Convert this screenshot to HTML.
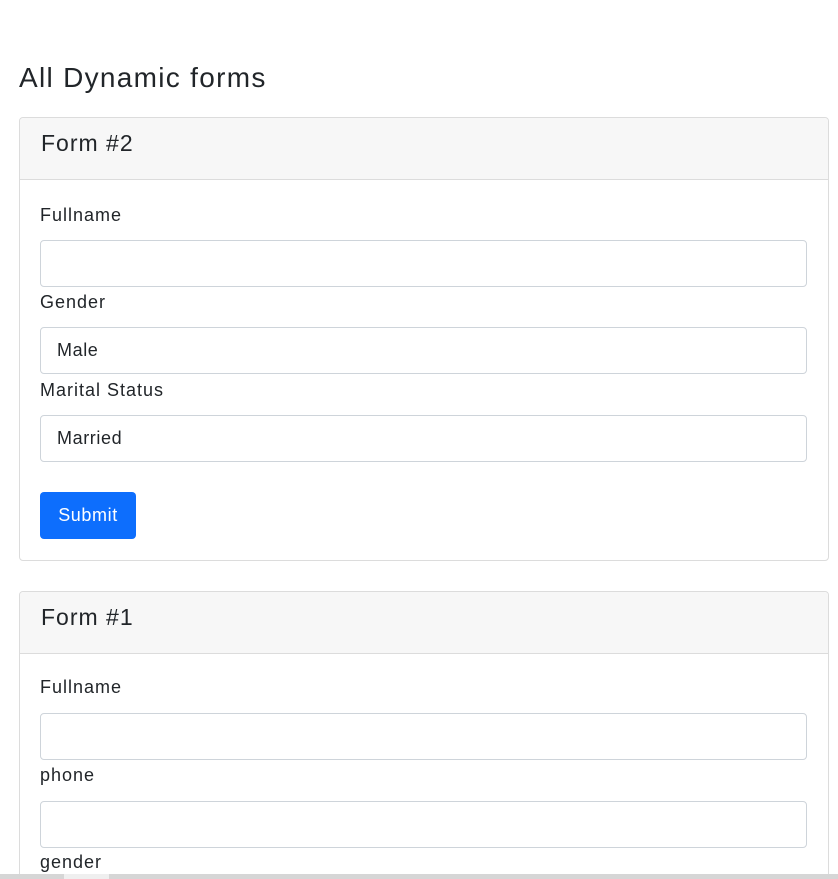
<!DOCTYPE html>
<html style="overflow:hidden;height:879px"><head><style>
body{margin:0;width:838px;height:879px;overflow:hidden;background:#fff;font-family:"Liberation Sans",sans-serif;color:#212529;position:relative}
.a{position:absolute}
h1{position:absolute;left:19px;top:60px;margin:0;font-size:28px;font-weight:400;line-height:36px;letter-spacing:1.3px}
.card{position:absolute;left:19px;width:808px;border:1px solid #dcdcdc;border-radius:4px;background:#fff}
.hd{height:62px;background:#f7f7f7;border-bottom:1px solid #dcdcdc;font-size:23px;line-height:50px;padding-left:21px;box-sizing:border-box;border-radius:4px 4px 0 0;letter-spacing:1px}
.lb{position:absolute;left:20px;font-size:18px;line-height:24px;letter-spacing:1px}
.in{position:absolute;left:20px;width:749px;height:45px;border:1px solid #ced4da;border-radius:4px;font-size:18px;line-height:45px;padding-left:16px;letter-spacing:.6px}
.btn{position:absolute;left:20px;width:96px;height:47px;background:#0d6efd;color:#fff;border-radius:4px;font-size:18px;line-height:47px;text-align:center;letter-spacing:.6px}
</style></head><body>
<h1>All Dynamic forms</h1>
<div class="card" style="top:117px;height:442px">
<div class="hd">Form #2</div>
<div class="lb" style="top:85px">Fullname</div>
<div class="in" style="top:122px"></div>
<div class="lb" style="top:172px">Gender</div>
<div class="in" style="top:209px">Male</div>
<div class="lb" style="top:260px">Marital Status</div>
<div class="in" style="top:297px">Married</div>
<div class="btn" style="top:374px">Submit</div>
</div>
<div class="card" style="top:591px;height:300px">
<div class="hd">Form #1</div>
<div class="lb" style="top:83px">Fullname</div>
<div class="in" style="top:121px"></div>
<div class="lb" style="top:171px">phone</div>
<div class="in" style="top:209px"></div>
<div class="lb" style="top:258px">gender</div>
</div>
<div class="a" style="left:0;top:874px;width:838px;height:5px;background:#d6d6d6"></div>
<div class="a" style="left:64px;top:874px;width:45px;height:5px;background:#efefef"></div>
</body></html>
